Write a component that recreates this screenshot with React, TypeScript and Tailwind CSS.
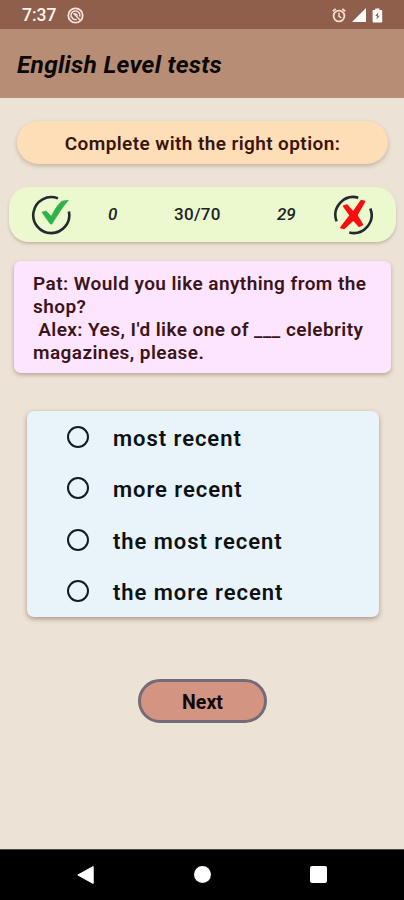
import React from "react";

const options = ["most recent", "more recent", "the most recent", "the more recent"];

function StatusBar() {
  return (
    <div className="flex h-[29px] items-center bg-[#8f5f4b] pl-[22px] pr-[21px] text-[#fff5ee]">
      <span className="mt-[3px] text-[17.5px] leading-none font-medium">7:37</span>
      <svg className="ml-[11px] mt-[1px]" width="17" height="17" viewBox="0 0 17 17" fill="none" stroke="#f6e4da">
        <circle cx="8.5" cy="8.5" r="7.2" strokeWidth="1.8" />
        <path d="M4.4 10.4A4.5 4.5 0 1 1 12.8 9.6" strokeWidth="1.5" />
        <path d="M7.4 7.2L13 13M4.6 9.8C5.4 12 7.5 13 9.8 12.4" strokeWidth="1.4" />
        <path d="M6.4 7.2C7.6 6.4 9.6 6.8 10.4 8.6" strokeWidth="1.6" />
      </svg>
      <div className="mt-[1px] ml-auto flex items-center">
        <svg width="14" height="15" viewBox="0 0 14 15" fill="none" stroke="#f3ded3">
          <circle cx="7" cy="8" r="5.4" strokeWidth="1.8" />
          <path d="M0.8 3.2L3.7 0.9M13.2 3.2L10.3 0.9" strokeWidth="1.8" />
          <path d="M7 4.8V8.3L9.4 9.9" strokeWidth="1.5" />
        </svg>
        <svg className="ml-[6px]" width="14" height="14" viewBox="0 0 14 14" fill="#fff">
          <path d="M14 0V14H0Z" />
        </svg>
        <svg className="ml-[6px]" width="11" height="15" viewBox="0 0 11 15">
          <path d="M3.2 0.5H7.4V2H9.4Q10.2 2 10.2 2.8V13.7Q10.2 14.5 9.4 14.5H1.4Q.6 14.5 .6 13.7V2.8Q.6 2 1.4 2H3.2Z" fill="#fff" />
          <path d="M6.3 4.3L3.2 8H5L4.5 11.5L7.7 7.7H5.8Z" fill="#8f5f4b" />
        </svg>
      </div>
    </div>
  );
}

function CorrectIcon() {
  return (
    <svg width="40" height="40" viewBox="0 0 40 40" fill="none">
      <path d="M27 3.4A18 18 0 1 0 37.9 16.5" stroke="#222a30" strokeWidth="2.6" />
      <path d="M11 17.2L15 16L20.3 21.4C24 13.8 28 8.3 31 6.2L37.3 5.3C31 12.4 26.6 20 20.8 29Q19.5 29.6 18.6 28Z" fill="#2eb24a" stroke="#2eb24a" strokeWidth="0.8" strokeLinejoin="round" />
    </svg>
  );
}

function WrongIcon() {
  return (
    <svg width="40" height="40" viewBox="0 0 40 40" fill="none">
      <path d="M25.3 2.7A18 18 0 0 0 3.6 26.4" stroke="#222a30" strokeWidth="2.6" />
      <path d="M37.3 13.4A18 18 0 0 1 16.3 37.5" stroke="#222a30" strokeWidth="2.6" />
      <path d="M10.3 11L14 9.8L20.2 16.9L28.2 5.4L31.8 6.4L24 20.3L29.8 29.7L26 31.4L20.3 25L11.2 33.6L7.6 32.6L17 20.4Z" fill="#f90d0d" stroke="#f90d0d" strokeWidth="1.2" strokeLinejoin="round" />
    </svg>
  );
}

export default function App() {
  return (
    <div className="flex h-[900px] w-[404px] flex-col overflow-hidden bg-[#ece2d6] font-[Roboto,sans-serif]">
      <StatusBar />
      <header className="flex h-[69px] items-center bg-[#b88d75] pl-[17px]">
        <h1 className="mt-[4px] text-[24.5px] leading-none font-bold tracking-[0.25px] whitespace-nowrap text-[#0b0808] italic">English Level tests</h1>
      </header>

      <main className="flex flex-1 flex-col">
        <div className="mt-[23px] ml-[17px] flex h-[43px] w-[371px] items-center justify-center rounded-full bg-[#fedeb7] shadow-[0_2px_4px_rgba(90,60,40,0.28)]">
          <span className="mt-[2px] text-[19px] leading-none font-semibold tracking-[0.4px] whitespace-nowrap text-[#3b150a]">Complete with the right option:</span>
        </div>

        <div className="mt-[23px] ml-[9px] flex h-[55px] w-[387px] items-center rounded-[20px] bg-[#ecf9ce] pl-[22px] text-[17px] font-medium text-[#20242a] shadow-[0_2px_3px_rgba(90,60,40,0.25)]">
          <CorrectIcon />
          <span className="ml-[37px] w-[66px] italic">0</span>
          <span className="w-[103px] tracking-[0.3px]">30/70</span>
          <span className="w-[56px] italic">29</span>
          <WrongIcon />
        </div>

        <div className="mt-[19px] ml-[14px] h-[112px] w-[377px] rounded-[7px] bg-[#fde5ff] pt-[11px] pl-[19px] text-[19px] leading-[23px] font-semibold tracking-[0.43px] whitespace-pre text-[#3b1519] shadow-[0_2px_4px_rgba(90,60,40,0.35)]">
          <p>Pat: Would you like anything from the</p>
          <p>shop?</p>
          <p> Alex: Yes, I'd like one of ___ celebrity</p>
          <p>magazines, please.</p>
        </div>

        <div className="mt-[38px] ml-[27px] flex h-[206px] w-[352px] flex-col rounded-[7px] bg-[#e8f4f9] shadow-[0_2px_5px_rgba(90,60,40,0.45)]">
          {options.map((label) => (
            <label key={label} className="flex h-[51.7px] items-center pl-[40px]">
              <span className="size-[22px] rounded-full border-2 border-[#141b1e]" />
              <span className="mt-[4px] ml-[24px] text-[22px] leading-none font-semibold tracking-[0.95px] whitespace-nowrap text-[#0c1113]">{label}</span>
            </label>
          ))}
        </div>

        <button className="mt-[62px] ml-[138px] h-[44px] w-[129px] rounded-full border-[3px] border-[#746b78] bg-[#d39581] pt-[3px] text-[19.5px] leading-none font-bold text-[#100908]">
          Next
        </button>
      </main>

      <nav className="flex h-[51px] items-center border-t border-[#4b4641] bg-black pl-[77px]">
        <svg width="17" height="18" viewBox="0 0 17 18" fill="#fff">
          <path d="M16.2 0.5V17.5L0.8 9Z" stroke="#fff" strokeWidth="1" strokeLinejoin="round" />
        </svg>
        <span className="mb-[1px] ml-[100px] size-[17px] rounded-full bg-white" />
        <span className="mb-[1px] ml-[99px] size-[17px] rounded-[2px] bg-white" />
      </nav>
    </div>
  );
}
